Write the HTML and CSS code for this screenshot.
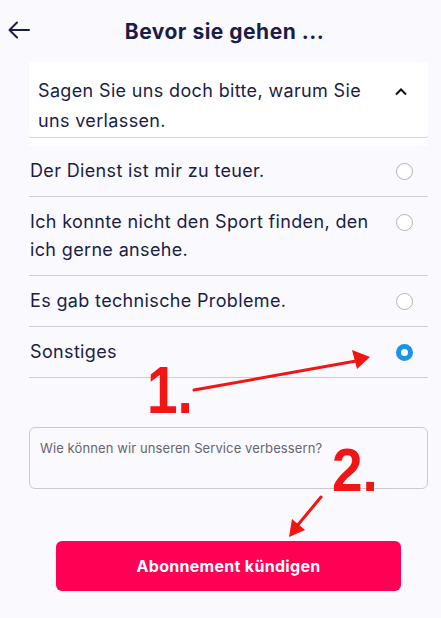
FILE: index.html
```html
<!DOCTYPE html>
<html lang="de">
<head>
<meta charset="utf-8">
<title>Bevor sie gehen</title>
<link rel="stylesheet" href="styles.css">
</head>
<body>
<div class="page">
  <header class="topbar">
    <button class="back" aria-label="Zurück">
      <svg width="22" height="18" viewBox="0 0 22 18"><path d="M21 9H2M9 1.5L1.5 9L9 16.5" fill="none" stroke="#1b1d45" stroke-width="2" stroke-linecap="round" stroke-linejoin="round"/></svg>
    </button>
    <h1 class="title">Bevor sie gehen ...</h1>
  </header>

  <section class="survey">
    <div class="question">
      <p class="question-text">Sagen Sie uns doch bitte, warum Sie uns verlassen.</p>
      <svg class="chevron" width="14" height="9" viewBox="0 0 14 9"><path d="M2 7.5L7 2.5L12 7.5" fill="none" stroke="#111" stroke-width="2"/></svg>
    </div>
    <div class="question-gap"></div>

    <label class="option">
      <span class="option-text">Der Dienst ist mir zu teuer.</span>
      <span class="radio"></span>
    </label>
    <label class="option">
      <span class="option-text">Ich konnte nicht den Sport finden, den ich gerne ansehe.</span>
      <span class="radio"></span>
    </label>
    <label class="option">
      <span class="option-text">Es gab technische Probleme.</span>
      <span class="radio"></span>
    </label>
    <label class="option">
      <span class="option-text">Sonstiges</span>
      <span class="radio checked"></span>
    </label>

    <div class="feedback">
      <div class="textarea">Wie können wir unseren Service verbessern?</div>
    </div>
  </section>

  <div class="actions">
    <button class="cancel">Abonnement kündigen</button>
  </div>

  <div class="mark mark-1">1.</div>
  <div class="mark mark-2">2.</div>
  <svg class="arrows" width="441" height="618" viewBox="0 0 441 618">
    <g stroke="#f31414" stroke-width="3" stroke-linecap="round" fill="none">
      <path d="M194 390L356 361"/>
      <path d="M321 497L297 526"/>
    </g>
    <g fill="#f31414">
      <path d="M370 357L352 350L357 369Z"/>
      <path d="M289 537L292 519L305 530Z"/>
    </g>
  </svg>
</div>
</body>
</html>
```

FILE: styles.css
```css
* { box-sizing: border-box; }
html, body { margin: 0; padding: 0; }
body {
  background: #f9f9fe;
  font-family: Inter, "Noto Sans", "Liberation Sans", sans-serif;
  color: #1b1d45;
}
.page {
  position: relative;
  width: 441px;
  height: 618px;
  overflow: hidden;
}
.topbar {
  position: relative;
  height: 62px;
  display: flex;
  align-items: center;
  justify-content: center;
}
.back {
  position: absolute;
  left: 8px;
  top: 21px;
  padding: 0;
  border: 0;
  background: transparent;
  display: flex;
}
.title {
  margin: 0 0 0 8px;
  font-size: 21px;
  font-weight: 700;
  letter-spacing: 0.5px;
}
.survey {
  margin: 0 13px 0 29px;
}
.question {
  background: #fff;
  display: flex;
  align-items: flex-start;
  padding: 14px 20px 1px 9px;
  border-bottom: 1px solid #d4d4da;
  border-radius: 0 0 3px 3px;
  box-shadow: 0 1px 1px rgba(0,0,0,0.05);
}
.question-text {
  margin: 0;
  flex: 1;
  font-size: 18px;
  line-height: 30px;
  letter-spacing: 0.35px;
  padding-right: 20px;
}
.chevron { margin-top: 11px; }
.question-gap {
  height: 8px;
  background: #fff;
}
.option {
  display: flex;
  align-items: flex-start;
  justify-content: space-between;
  padding: 11px 15px 11px 1px;
  border-bottom: 1px solid #cdcdd3;
}
.option-text {
  font-size: 18px;
  line-height: 28px;
  letter-spacing: 0.35px;
  flex: 1;
  padding-right: 12px;
}
.radio {
  width: 17px;
  height: 17px;
  border-radius: 50%;
  border: 1px solid #b4b4b8;
  background: #fff;
  margin-top: 6px;
  flex: none;
}
.radio.checked {
  border: 5px solid #1a94e9;
  background: #fff;
}
.feedback {
  padding-top: 49px;
}
.textarea {
  height: 62px;
  border: 1px solid #cacacf;
  border-radius: 6px;
  background: #f9f9fe;
  padding: 12px 10px;
  font-size: 13px;
  letter-spacing: 0.1px;
  color: #66666e;
}
.actions {
  display: flex;
  padding: 52px 0 0 56px;
}
.cancel {
  width: 345px;
  height: 50px;
  border: 0;
  border-radius: 6px;
  background: #ff0055;
  color: #fff;
  font-family: inherit;
  font-size: 16px;
  font-weight: 700;
  letter-spacing: 0.3px;
}
.mark {
  position: absolute;
  color: #f31414;
  font-family: "Liberation Sans", Arial, sans-serif;
  font-weight: 700;
  line-height: 1;
  transform-origin: left top;
}
.mark-1 {
  left: 147px;
  top: 356px;
  font-size: 67px;
  transform: scaleX(0.82);
}
.mark-2 {
  left: 332px;
  top: 440px;
  font-size: 61px;
  transform: scaleX(0.9);
}
.arrows {
  position: absolute;
  left: 0;
  top: 0;
  pointer-events: none;
}
```
